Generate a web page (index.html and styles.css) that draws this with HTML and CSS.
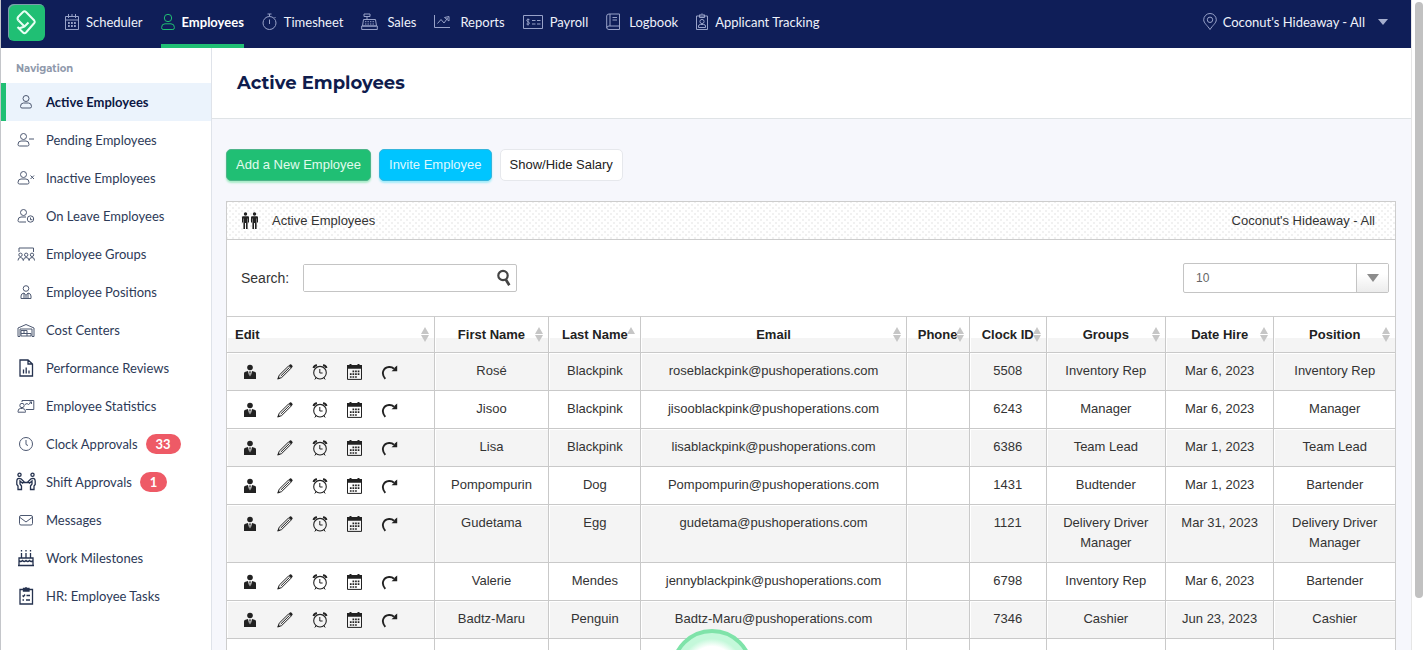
FILE: index.html
```html
<!DOCTYPE html>
<html lang="en">

<head>
    <meta charset="UTF-8">
    <meta name="viewport" content="width=device-width, initial-scale=1.0">
    <title>Active Employees</title>
    <link rel="stylesheet" href="styles.css">
</head>

<body>
    <!-- row action icons -->
    <svg class="sprite" aria-hidden="true">
        <symbol id="i-profile" viewBox="0 0 18 16">
            <circle cx="9" cy="3.500" r="2.800"/>
            <path d="M3 15V9.500q0-1.500 1.500-1.800L7 7l1.300 5.500.4-3L8 7.500h2l-.7 2 .4 3L11 7l2.500.7q1.500.3 1.500 1.800V15z"/>
        </symbol>
        <symbol id="i-edit" viewBox="0 0 18 16">
            <path d="M2 14.800 3.200 11.200 12.500 2 14.900 4.400 5.600 13.600zM4.800 12 13 3.900" fill="none" stroke="currentColor"/>
            <path d="M12.800 1.500 14 .5Q14.700 0 15.300.6L16.400 1.700Q17 2.400 16.400 3.100L15.300 4.200zM1.300 15.600 2.300 12.600 4.300 14.600z"/>
        </symbol>
        <symbol id="i-clock" viewBox="0 0 18 16">
            <g fill="none" stroke="currentColor">
                <circle cx="9" cy="8.700" r="6.300" stroke-width="1.100"/>
                <path d="M8.800 5v4h2.800M5 13.800 3.800 15.500M13 13.800l1.200 1.700"/>
                <path d="M2.500 4Q3.200 1.600 6 1.300M15.500 4Q14.800 1.600 12 1.300" stroke-width="2"/>
            </g>
        </symbol>
        <symbol id="i-calendar" viewBox="0 0 18 16">
            <path d="M1 1h2.500V0h2v1h6V0h2v1H16v3.800H1z"/>
            <path d="M1.500 4v11.400h14V4" fill="none" stroke="currentColor"/>
            <path d="M6.500 7.400h7.500M3.900 10.200h10.100M3.900 13h7.500" fill="none" stroke="currentColor" stroke-width="1.700" stroke-dasharray="1.700 .9"/>
        </symbol>
        <symbol id="i-redo" viewBox="0 0 18 16">
            <path d="M4.300 14.800C-.5 9.500 2.500 3.300 8 3q3-.2 5 1.700" fill="none" stroke="currentColor" stroke-width="1.900"/>
            <path d="M16.200 1.500v5.700h-5.700l2-1.700L14 3.300z"/>
        </symbol>
    </svg>

    <header class="topbar">
        <a class="logo" href="#" aria-label="Home">
            <svg viewBox="0 0 36 36" width="36" height="36">
                <g fill="none" stroke="#e9fff4" stroke-width="2" stroke-linejoin="round">
                    <path d="M10.500 16.500Q8.500 14.500 10.500 12.500L15 8Q16.500 6.600 18 8L26.300 16.500Q27.300 17.800 26.300 19L18 28.500Q16.500 30 15 28.500L9.500 23"/>
                    <path d="M10.500 16.500 16.500 22.500l4-4M16.500 22.500l-5.500 2"/>
                </g>
            </svg>
        </a>
        <nav class="main-nav">
            <a href="#">
                <svg width="14" height="18" viewBox="0 0 14 18">
                    <path d="M.5 3.500h13v13H.5zM.5 7h13M3.500 1v4M7 1v2M10.500 1v4"/>
                    <path d="M3 10h8.500M3 13h8.500" stroke-width="1.800" stroke-dasharray="1.800 1.200"/>
                </svg>Scheduler
            </a>
            <a href="#" class="active">
                <svg width="14" height="18" viewBox="0 0 14 18">
                    <circle cx="7" cy="5" r="3.700"/>
                    <path d="M.6 14.500Q.6 10.800 4 10.800h6q3.400 0 3.400 3.700 0 2-1.500 2H2.100q-1.500 0-1.500-2z"/>
                </svg>Employees
            </a>
            <a href="#">
                <svg width="15" height="18" viewBox="0 0 15 18">
                    <circle cx="7.500" cy="10" r="6.500"/>
                    <path d="M7.500 6.500V11M5.500 1h4M7.500 1v2.500M12.500 4l1 1"/>
                </svg>Timesheet
            </a>
            <a href="#">
                <svg width="19" height="18" viewBox="0 0 19 18">
                    <path d="M3 1h6v2.500H3zM6 3.500v3M2.500 6.500h12l1 6.500h-14zM.7 13h15.600v3.500H.7z"/>
                    <path d="M4 8.700h9M4 11h9" stroke-dasharray="1.400 1.100"/>
                </svg>Sales
            </a>
            <a href="#">
                <svg width="19" height="18" viewBox="0 0 19 18">
                    <path d="M.5 2v12.500H16M3.500 10.500 7 6.500l3 3.500 4-5.500M10.500 4.500 15 3.500V8z"/>
                </svg>Reports
            </a>
            <a href="#">
                <svg width="20" height="18" viewBox="0 0 20 18">
                    <path d="M.5 2.500h19v13H.5zM9 7.500h3.500M14 7.500h3.500M9 11h3.500M14 11h3.500M6.500 6.700Q3.500 5.700 3.700 7.500C4 9 6.500 8.700 6.500 10.400Q6 11.800 3.500 11M5 5.500v7"/>
                </svg>Payroll
            </a>
            <a href="#">
                <svg width="16" height="18" viewBox="0 0 16 18">
                    <path d="M13.500 13V1H3Q.7 1 .7 3v11.500Q.7 16.500 3 16.500h10.500V13H3Q.7 13 .7 15M4 1v12M6.500 4.500H11M6.500 7H11"/>
                </svg>Logbook
            </a>
            <a href="#">
                <svg width="12" height="18" viewBox="0 0 12 18">
                    <path d="M.5 3h11v13.500H.5zM3.500 3V1.800h1.300Q6-.3 7.200 1.800h1.300V4.500h-5zM2.500 14.500V13q0-1.500 2-1.500h3q2 0 2 1.500v1.500z"/>
                    <circle cx="6" cy="8.500" r="2.100"/>
                </svg>Applicant Tracking
            </a>
        </nav>
        <button type="button" class="location">
            <svg width="14" height="18" viewBox="0 0 14 18">
                <path d="M7 16.500C4.500 12.500.7 10 .7 6.800a6.300 6.300 0 0 1 12.600 0C13.300 10 9.500 12.500 7 16.500z"/>
                <circle cx="7" cy="6.800" r="2.700"/>
            </svg>
            Coconut's Hideaway - All
            <span class="caret"></span>
        </button>
    </header>

    <div class="layout">
        <aside class="sidebar">
            <h2>Navigation</h2>
            <nav class="side-nav">
                <a href="#" class="active">
                    <svg viewBox="0 0 20 20"><circle cx="10" cy="6.500" r="3"/><path d="M4.500 14.500q0-3.500 3-3.500h5q3 0 3 3.500 0 1.500-1.500 1.500H6q-1.500 0-1.500-1.500z"/></svg>
                    Active Employees
                </a>
                <a href="#">
                    <svg viewBox="0 0 20 20"><circle cx="7.500" cy="6.500" r="3"/><path d="M2 14.500Q2 11 5 11h5q3 0 3 3.500 0 1.500-1.500 1.500h-8Q2 16 2 14.500zM13 9h5"/></svg>
                    Pending Employees
                </a>
                <a href="#">
                    <svg viewBox="0 0 20 20"><circle cx="7.500" cy="6.500" r="3"/><path d="M2 14.500Q2 11 5 11h5q3 0 3 3.500 0 1.500-1.500 1.500h-8Q2 16 2 14.500zM14.500 7.500 18 11M18 7.500 14.500 11"/></svg>
                    Inactive Employees
                </a>
                <a href="#">
                    <svg viewBox="0 0 20 20"><circle cx="7.500" cy="6.500" r="3"/><path d="M10 11H5q-3 0-3 3.500Q2 16 3.500 16H10M14.500 11.500v2.200h1.800"/><circle cx="14.500" cy="13" r="3.200"/></svg>
                    On Leave Employees
                </a>
                <a href="#">
                    <svg viewBox="0 0 20 20"><path d="M3 8V4h14.500v4"/><circle cx="4.500" cy="10.800" r="1.700"/><circle cx="10.200" cy="10.800" r="1.700"/><circle cx="16" cy="10.800" r="1.700"/><path d="M2 16.500q0-3 2.500-3t2.800 3q.2-3 2.900-3t2.900 3q.2-3 2.900-3t2.500 3"/></svg>
                    Employee Groups
                </a>
                <a href="#">
                    <svg viewBox="0 0 20 20"><circle cx="10" cy="6.500" r="2.800"/><path d="M5 16.500V14q0-2.500 3-3l2 2.500L12 11q3 .5 3 3v2.500zM8 11v5.500M12 11v5.500M10 13.500v3"/></svg>
                    Employee Positions
                </a>
                <a href="#">
                    <svg viewBox="0 0 20 20"><path d="M2 16.500V8l8-3.500L18 8v8.500h-2V9H4v7.500zM5 10.500h6V16M5 13.500h10V16H5v-5.500M8 10.500v3"/></svg>
                    Cost Centers
                </a>
                <a href="#">
                    <svg class="heavy" viewBox="0 0 20 20"><path d="M4 2h8l4.500 4v12H4zM12 2v4h4.500M7.500 15.500v-4M10.200 15.500V9.500M13 15.500v-3"/></svg>
                    Performance Reviews
                </a>
                <a href="#">
                    <svg viewBox="0 0 20 20"><path d="M6 6V4.500h11.800v9H10M9 8.500l2-1 1.500 1L15.500 6M13.500 6h2v2M2 15.500q0-3 2.500-3h2q3 0 3 3v.7H2z"/><circle cx="6" cy="9.500" r="2.200"/></svg>
                    Employee Statistics
                </a>
                <a href="#">
                    <svg viewBox="0 0 20 20"><circle cx="10" cy="10" r="6.500"/><path d="M10 6v4.500l2 1"/></svg>
                    Clock Approvals
                    <span class="badge">33</span>
                </a>
                <a href="#">
                    <svg class="heavy" viewBox="0 0 20 20"><circle cx="3.500" cy="2.800" r="1.600"/><circle cx="16.500" cy="2.800" r="1.600"/><path d="M2 17.500h3.500V14L4 12V9l2.500 2.200L8 9.800 5 6.800Q1 5.500.8 9v3.500L2 14zM18 17.500h-3.500V14l1.500-2V9l-2.500 2.200L12 9.800l3-3q4-1.300 4.200 2.200v3.500L18 14zM7.500 10.500h5"/></svg>
                    Shift Approvals
                    <span class="badge">1</span>
                </a>
                <a href="#">
                    <svg viewBox="0 0 20 20"><rect x="3.500" y="5.500" width="13" height="9.500" rx="1.500"/><path d="m4 7.500 6 4.500 6-4.500"/></svg>
                    Messages
                </a>
                <a href="#">
                    <svg class="heavy" viewBox="0 0 20 20"><path d="M5.500 5v5M10 5v5M14.500 5v5M5.500 2v1.500M10 2v1.500M14.500 2v1.500M3 17v-7h14v7M3 12.500q1.700 2 3.500 0 1.700 2 3.500 0 1.700 2 3.500 0 1.700 2 3.500 0M2 17.500h16"/></svg>
                    Work Milestones
                </a>
                <a href="#">
                    <svg class="heavy" viewBox="0 0 20 20"><path d="M4 3.500h12.500V18H4zM7.500 2.500h5.500v2.500H7.500zM10 1v1.500M6.500 9.500l1 1 1.500-2M10.500 9.500h3.500M6.500 14h1.500M10 14h4"/></svg>
                    HR: Employee Tasks
                </a>
            </nav>
        </aside>

        <main class="content">
            <div class="page-title">
                <h1>Active Employees</h1>
            </div>

            <div class="page-body">
                <div class="actions">
                    <button type="button" class="btn btn-green">Add a New Employee</button>
                    <button type="button" class="btn btn-blue">Invite Employee</button>
                    <button type="button" class="btn">Show/Hide Salary</button>
                </div>

                <section class="panel">
                    <div class="panel-head">
                        <svg width="18" height="18" viewBox="0 0 18 18">
                            <g id="man"><circle cx="4.500" cy="2" r="1.700"/><path d="M2 4.200h5q1 0 1 1.200v5.100H7V6.500h-.4V17H5v-6H4v6H2.400V6.500H2v4H1V5.400Q1 4.200 2 4.200z"/></g>
                            <use href="#man" x="9"/>
                        </svg>
                        <span>Active Employees</span>
                        <span class="panel-location">Coconut's Hideaway - All</span>
                    </div>

                    <div class="table-tools">
                        <label for="search">Search:</label>
                        <div class="search-box">
                            <input type="text" id="search">
                            <button type="button" aria-label="Search">
                                <svg width="14" height="18" viewBox="0 0 14 18"><circle cx="6" cy="6.500" r="4.700" stroke-width="2.200"/><path d="m8.800 10.500 3.500 5.800" stroke-width="2.700"/></svg>
                            </button>
                        </div>
                        <div class="page-size">
                            <select aria-label="Rows per page">
                                <option>10</option>
                                <option>25</option>
                                <option>50</option>
                            </select>
                            <span class="page-size-arrow"></span>
                        </div>
                    </div>

                    <table class="employees">
                        <thead>
                            <tr>
                                <th class="col-edit">Edit<span class="sort"></span></th>
                                <th class="col-first">First Name<span class="sort"></span></th>
                                <th class="col-last">Last Name<span class="sort asc"></span></th>
                                <th class="col-email">Email<span class="sort"></span></th>
                                <th class="col-phone">Phone<span class="sort"></span></th>
                                <th class="col-clock">Clock ID<span class="sort"></span></th>
                                <th class="col-groups">Groups<span class="sort"></span></th>
                                <th class="col-hire">Date Hire<span class="sort"></span></th>
                                <th class="col-position">Position<span class="sort"></span></th>
                            </tr>
                        </thead>
                        <tbody id="employeeRows"></tbody>
                    </table>
                </section>
            </div>
        </main>
    </div>

    <div class="scrollbar"><div class="scroll-thumb"></div></div>
    <div class="click-ring"></div>

    <script src="script.js"></script>
</body>

</html>
```
FILE: styles.css
```css
* {
    box-sizing: border-box;
}

body {
    margin: 0;
    height: 100vh;
    display: flex;
    flex-direction: column;
    overflow: hidden;
    position: relative;
    padding-right: 13px;
    border-left: 1px solid #c4c6ca;
    background-color: #fff;
    color: #333;
    font-family: "Liberation Sans", Arial, sans-serif;
    font-size: 13px;
    line-height: 20px;
}

a {
    color: inherit;
    text-decoration: none;
}

button {
    font: inherit;
    cursor: pointer;
}

.sprite {
    position: absolute;
    width: 0;
    height: 0;
}

/* top bar */
.topbar {
    flex: none;
    display: flex;
    height: 48px;
    padding: 0 23px 0 7px;
    background-color: #0f1e58;
    color: #eef1fa;
    font-family: Lato, sans-serif;
    font-size: 13px;
}

.topbar svg {
    flex: none;
    fill: none;
    stroke: #98a2c8;
}

.logo {
    align-self: flex-start;
    width: 37px;
    height: 37px;
    margin: 4px 20px 0 0;
    border-radius: 6px;
    background-color: #20bf74;
    box-shadow: inset 1px 1px 0 #7d9dac;
}

.main-nav {
    display: flex;
    gap: 18px;
}

.main-nav a {
    display: flex;
    align-items: center;
    gap: 7px;
    padding-bottom: 1px;
    border-bottom: 4px solid transparent;
    white-space: nowrap;
}

.main-nav a.active {
    border-color: #20bf74;
    color: #fff;
    font-weight: bold;
}

.main-nav a.active svg {
    stroke: #20bf74;
}

.location {
    display: flex;
    align-items: center;
    gap: 6px;
    margin-left: auto;
    padding: 0 0 5px;
    border: 0;
    background: none;
    color: #eef1fa;
}

.caret {
    margin-left: 7px;
    border: 5px solid transparent;
    border-top: 6px solid #a5aecd;
    border-bottom: 0;
}

/* sidebar */
.layout {
    flex: 1;
    display: flex;
    min-height: 0;
}

.sidebar {
    flex: none;
    width: 211px;
    border-right: 1px solid #dfe3ea;
}

.sidebar h2 {
    margin: 0;
    padding: 11px 15px 4px;
    color: #8f99ab;
    font-family: Montserrat, "Open Sans", sans-serif;
    font-size: 10px;
    font-weight: bold;
    line-height: 20px;
}

.side-nav a {
    display: flex;
    align-items: center;
    height: 38px;
    padding-left: 15px;
    color: #2d3a57;
    font-family: Lato, sans-serif;
    font-size: 13px;
}

.side-nav svg {
    width: 20px;
    height: 20px;
    margin-right: 10px;
    fill: none;
    stroke: #4d5871;
}

.side-nav svg.heavy {
    stroke: #25324f;
    stroke-width: 1.3;
}

.side-nav a.active {
    padding-left: 10px;
    border-left: 5px solid #20bf74;
    background-color: #ebf3fc;
    color: #0b1743;
    font-weight: bold;
}

.badge {
    margin-left: 8px;
    padding: 0 10px;
    border-radius: 10px;
    background-color: #ee5a66;
    color: #fff;
    font-weight: bold;
}

/* content */
.content {
    flex: 1;
    min-width: 0;
    background-color: #f6f7fc;
}

.page-title {
    height: 71px;
    padding: 20px 25px;
    border-bottom: 1px solid #dfe3e6;
    background-color: #fff;
}

.page-title h1 {
    margin: 0;
    color: #0f1c4d;
    font-family: Montserrat, "Open Sans", sans-serif;
    font-size: 18px;
    line-height: 30px;
}

.page-body {
    padding: 30px 15px 0 14px;
}

.actions {
    display: flex;
    gap: 8px;
    margin-bottom: 20px;
}

.btn {
    height: 32px;
    padding: 0 9px;
    border: 1px solid #e6e8ec;
    border-radius: 5px;
    background-color: #fff;
    color: #222;
}

.btn-green {
    border-color: #4fb48a;
    background-color: #20bf74;
    box-shadow: 0 2px 2px #a9ecc9;
    color: #e2fbee;
}

.btn-blue {
    border-color: #35b5dc;
    background-color: #00c5ff;
    box-shadow: 0 2px 2px #a5ecfa;
    color: #def8ff;
}

.panel {
    border: 1px solid #cdcdcd;
    border-bottom: 0;
    background-color: #fff;
}

.panel-head {
    display: flex;
    align-items: center;
    height: 38px;
    padding: 0 20px 0 14px;
    border-bottom: 1px solid #cdcdcd;
    background-image: radial-gradient(#f1f1f1 1px, transparent 1px), radial-gradient(#f1f1f1 1px, transparent 1px);
    background-position: 0 0, 3px 3px;
    background-size: 6px 6px;
}

.panel-head svg {
    margin-right: 13px;
    fill: #222;
}

.panel-location {
    margin-left: auto;
}

.table-tools {
    display: flex;
    align-items: center;
    height: 76px;
    padding: 0 6px 0 14px;
    font-size: 14px;
}

.search-box {
    display: flex;
    width: 214px;
    height: 28px;
    margin-left: 14px;
    border: 1px solid #c4c4c4;
    border-radius: 2px;
}

.search-box input {
    flex: 1;
    min-width: 0;
    padding: 0 6px;
    border: 0;
    font: inherit;
    outline: 0;
}

.search-box button {
    display: flex;
    align-items: center;
    padding: 0 5px;
    border: 0;
    background: none;
}

.search-box svg {
    fill: none;
    stroke: #444;
}

.page-size {
    position: relative;
    width: 206px;
    margin-left: auto;
}

.page-size select {
    display: block;
    width: 100%;
    height: 30px;
    padding: 0 12px;
    border: 1px solid #c4c4c4;
    border-radius: 2px;
    background-color: #fff;
    color: #666;
    font: inherit;
    font-size: 12px;
    appearance: none;
}

.page-size-arrow {
    position: absolute;
    top: 1px;
    right: 1px;
    bottom: 1px;
    width: 32px;
    display: flex;
    align-items: center;
    justify-content: center;
    border-left: 1px solid #c4c4c4;
    background: linear-gradient(#fff 35%, #ececec);
    pointer-events: none;
}

.page-size-arrow::before {
    content: "";
    border: 6px solid transparent;
    border-top: 8px solid #8c8c8c;
    border-bottom: 0;
}

/* employee table */
.employees {
    width: 100%;
    table-layout: fixed;
    border-collapse: separate;
    border-spacing: 0;
    text-align: center;
}

.employees th,
.employees td {
    border-left: 1px solid #c9c9c9;
    box-shadow: inset 1px 1px 0 #fff;
}

.employees th:first-child,
.employees td:first-child {
    border-left: 0;
    text-align: left;
}

.employees th {
    position: relative;
    height: 36px;
    padding: 0 8px;
    border-top: 1px solid #cdcdcd;
    background: linear-gradient(#fff 60%, #f4f4f4 60%);
    color: #222;
    white-space: nowrap;
}

.employees td {
    height: 38px;
    padding: 8px 8px 9px;
    border-top: 1px solid #c9c9c9;
    vertical-align: top;
}

.employees tbody tr:nth-child(odd) {
    background-color: #f4f4f4;
}

.col-edit { width: 17.7%; }
.col-first { width: 9.8%; }
.col-last { width: 7.9%; }
.col-email { width: 22.7%; }
.col-phone { width: 5.4%; }
.col-clock { width: 6.6%; }
.col-groups { width: 10.2%; }
.col-hire { width: 9.3%; }
.col-position { width: 10.4%; }

/* arrows sit over the end of long headings */
.sort {
    position: absolute;
    top: 10px;
    right: 5px;
    display: flex;
    flex-direction: column;
    gap: 1px;
}

.sort::before,
.sort::after {
    content: "";
    border: 4px solid transparent;
}

.sort::before {
    border-top: 0;
    border-bottom: 7px solid #c6c6c6;
}

.sort::after {
    border-top: 7px solid #c6c6c6;
    border-bottom: 0;
}

.sort.asc::after {
    display: none;
}

.row-icons {
    display: flex;
    gap: 17px;
    padding: 3px 0 0 6px;
}

.row-icons button {
    display: block;
    padding: 0;
    border: 0;
    background: none;
    color: #222;
}

.row-icons svg {
    display: block;
    width: 18px;
    height: 16px;
    fill: currentColor;
}

/* page scrollbar */
.scrollbar {
    position: absolute;
    top: 0;
    right: 0;
    bottom: 0;
    width: 13px;
    padding: 2px 1px 0 3px;
    border-left: 1px solid #e6e6e6;
    background-color: #fff;
}

.scroll-thumb {
    height: 92%;
    border-radius: 4px;
    background-color: #c1c1c1;
}

/* pointer click highlight */
.click-ring {
    position: absolute;
    bottom: -61px;
    left: 50%;
    width: 82px;
    height: 82px;
    margin-left: -42px;
    border: 4px solid #7fe3a9;
    border-radius: 50%;
    background: radial-gradient(#fff 45%, #c4f8da 60%);
    pointer-events: none;
}
```
FILE: script.js
```javascript
const employees = [
    ["Rosé", "Blackpink", "roseblackpink@pushoperations.com", "", "5508", "Inventory Rep", "Mar 6, 2023", "Inventory Rep"],
    ["Jisoo", "Blackpink", "jisooblackpink@pushoperations.com", "", "6243", "Manager", "Mar 6, 2023", "Manager"],
    ["Lisa", "Blackpink", "lisablackpink@pushoperations.com", "", "6386", "Team Lead", "Mar 1, 2023", "Team Lead"],
    ["Pompompurin", "Dog", "Pompompurin@pushoperations.com", "", "1431", "Budtender", "Mar 1, 2023", "Bartender"],
    ["Gudetama", "Egg", "gudetama@pushoperations.com", "", "1121", "Delivery Driver Manager", "Mar 31, 2023", "Delivery Driver Manager"],
    ["Valerie", "Mendes", "jennyblackpink@pushoperations.com", "", "6798", "Inventory Rep", "Mar 6, 2023", "Bartender"],
    ["Badtz-Maru", "Penguin", "Badtz-Maru@pushoperations.com", "", "7346", "Cashier", "Jun 23, 2023", "Cashier"],
    ["", "", "", "", "", "", "", ""]
];

const actions = ["profile", "edit", "clock", "calendar", "redo"];

const icons = actions.map(function (name) {
    return `<button type="button" aria-label="${name}"><svg><use href="#i-${name}"/></svg></button>`;
}).join("");

document.querySelector("#employeeRows").innerHTML = employees.map(function (employee) {
    const cells = employee.map(value => `<td>${value}</td>`).join("");
    const edit = employee[0] ? `<div class="row-icons">${icons}</div>` : "";
    return `<tr><td>${edit}</td>${cells}</tr>`;
}).join("");
```
